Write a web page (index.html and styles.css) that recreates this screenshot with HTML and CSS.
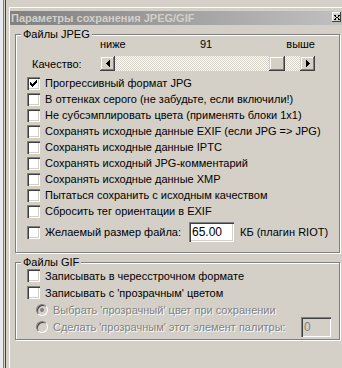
FILE: index.html
```html
<!DOCTYPE html>
<html lang="ru">
<head>
    <meta charset="UTF-8">
    <title>Параметры сохранения JPEG/GIF</title>
    <link rel="stylesheet" href="styles.css">
</head>
<body>

<div class="screen">
    <div class="edge"></div>

    <div class="window">
        <div class="caption">
            <span class="caption-title">Параметры сохранения JPEG/GIF</span>
            <span class="caption-close">
                <svg width="6" height="5" viewBox="0 0 6 5" shape-rendering="crispEdges">
                    <path d="M0 0h2v1H0zM4 0h2v1H4zM1 1h1v1H1zM4 1h1v1H4zM2 2h2v1H2zM1 3h1v1H1zM4 3h1v1H4zM0 4h2v1H0zM4 4h2v1H4z" fill="#000"/>
                </svg>
            </span>
        </div>

        <!-- JPEG -->
        <fieldset class="group group-jpeg">
            <legend>Файлы JPEG</legend>

            <div class="quality">
                <div class="quality-marks">
                    <span>ниже</span>
                    <span>91</span>
                    <span>выше</span>
                </div>
                <label class="quality-label">Качество:</label>
                <div class="slider">
                    <span class="btn slider-btn">
                        <svg width="4" height="7" viewBox="0 0 4 7" shape-rendering="crispEdges"><path d="M3 0h1v7H3zM2 1h1v5H2zM1 2h1v3H1zM0 3h1v1H0z" fill="#000"/></svg>
                    </span>
                    <span class="slider-track">
                        <span class="btn slider-thumb" style="margin-left:154px"></span>
                    </span>
                    <span class="btn slider-btn">
                        <svg width="4" height="7" viewBox="0 0 4 7" shape-rendering="crispEdges"><path d="M0 0h1v7H0zM1 1h1v5H1zM2 2h1v3H2zM3 3h1v1H3z" fill="#000"/></svg>
                    </span>
                </div>
            </div>

            <ul class="checks">
                <li class="check"><span class="box checked"><svg width="13" height="13" viewBox="0 0 13 13" shape-rendering="crispEdges"><path d="M3 5h1v3H3zM4 6h1v3H4zM5 7h1v3H5zM6 6h1v3H6zM7 5h1v3H7zM8 4h1v3H8zM9 3h1v3H9z" fill="#000"/></svg></span>Прогрессивный формат JPG</li>
                <li class="check"><span class="box"></span>В оттенках серого (не забудьте, если включили!)</li>
                <li class="check"><span class="box"></span>Не субсэмплировать цвета (применять блоки 1x1)</li>
                <li class="check"><span class="box"></span>Сохранять исходные данные EXIF (если JPG =&gt; JPG)</li>
                <li class="check"><span class="box"></span>Сохранять исходные данные IPTC</li>
                <li class="check"><span class="box"></span>Сохранять исходный JPG-комментарий</li>
                <li class="check"><span class="box"></span>Сохранять исходные данные XMP</li>
                <li class="check"><span class="box"></span>Пытаться сохранить с исходным качеством</li>
                <li class="check"><span class="box"></span>Сбросить тег ориентации в EXIF</li>
            </ul>

            <div class="check size-row">
                <span class="box"></span>
                <span>Желаемый размер файла:</span>
                <input class="field size-field" type="text" value="65.00">
                <span>КБ (плагин RIOT)</span>
            </div>
        </fieldset>

        <!-- GIF -->
        <fieldset class="group group-gif">
            <legend>Файлы GIF</legend>

            <ul class="checks gif-checks">
                <li class="check"><span class="box"></span>Записывать в чересстрочном формате</li>
                <li class="check"><span class="box"></span>Записывать с 'прозрачным' цветом</li>
                <li class="check radio-row disabled"><span class="radio checked"></span>Выбрать 'прозрачный' цвет при сохранении</li>
                <li class="check radio-row disabled"><span class="radio"></span>Сделать 'прозрачным' этот элемент палитры:<input class="field index-field" type="text" value="0" disabled></li>
            </ul>
        </fieldset>
    </div>
</div>

</body>
</html>
```

FILE: styles.css
```css
* {
    box-sizing: border-box;
}
body {
    margin: 0;
    background-color: #d4d0c8;
    font-family: "Liberation Sans", Arial, sans-serif;
    font-size: 11px;
    color: #000;
}
.screen {
    display: flex;
    height: 368px;
    overflow: hidden;
}
.edge {
    width: 9px;
    flex: none;
    background: linear-gradient(to right, #e8eaf0 0 3px, #808080 3px 4px, #d4d0c8 4px 5px, #404040 5px 6px, #d4d0c8 6px);
}
.window {
    flex: 1;
    min-width: 0;
    margin-top: 7px;
    padding-top: 3px;
    border-top: 1px solid #fff;
    border-left: 1px solid #fff;
}

/* title bar */
.caption {
    height: 14px;
    display: flex;
    justify-content: space-between;
    padding: 0 1px;
    background: linear-gradient(to right, #808080, #c0c0c0);
    color: #d4d0c8;
    font-weight: bold;
    line-height: 14px;
}
.caption-close {
    width: 9px;
    height: 10px;
    margin-top: 1px;
    display: flex;
    align-items: center;
    justify-content: center;
    background-color: #d4d0c8;
    box-shadow: inset -1px -1px 0 #404040, inset 1px 1px 0 #fff;
}

/* raised buttons */
.btn {
    display: flex;
    align-items: center;
    justify-content: center;
    background-color: #d4d0c8;
    box-shadow: inset -1px -1px 0 #404040, inset 1px 1px 0 #d4d0c8, inset -2px -2px 0 #808080, inset 2px 2px 0 #fff;
}

/* group boxes */
.group {
    margin: 3px 2px 0 5px;
    padding: 0;
    min-width: 0;
    border: 1px solid #808080;
    box-shadow: inset 1px 1px 0 #fff, 1px 1px 0 #fff;
}
.group legend {
    margin-left: 5px;
    padding: 0 2px;
    line-height: 13px;
    background-color: #d4d0c8;
}
.group-jpeg {
    padding-bottom: 10px;
}
.group-gif {
    padding-bottom: 4px;
}

/* quality slider */
.quality {
    display: grid;
    grid-template-columns: 68px 215px;
    row-gap: 5px;
    margin-top: -3px;
    padding-left: 16px;
}
.quality-marks {
    grid-column: 2;
    display: flex;
    justify-content: space-between;
    line-height: 13px;
}
.quality-label {
    align-self: center;
}
.slider {
    display: flex;
    height: 15px;
}
.slider-btn {
    width: 15px;
    flex: none;
}
.slider-track {
    flex: 1;
    display: flex;
    background-color: #fff;
    background-image: conic-gradient(#d4d0c8 25%, #fff 0 50%, #d4d0c8 0 75%, #fff 0);
    background-size: 2px 2px;
}
.slider-thumb {
    width: 16px;
    flex: none;
}

/* checkboxes */
.checks {
    list-style: none;
    margin: 4px 0 0;
    padding: 0 0 0 11px;
}
.check {
    display: flex;
    align-items: center;
    gap: 5px;
    height: 16px;
    white-space: nowrap;
}
.box {
    width: 13px;
    height: 13px;
    flex: none;
    background-color: #fff;
    box-shadow: inset 1px 1px 0 #808080, inset 2px 2px 0 #404040, inset -1px -1px 0 #fff, inset -2px -2px 0 #d4d0c8;
}
.box svg {
    display: block;
}
.size-row {
    height: 20px;
    margin-top: 3px;
    padding-left: 11px;
}
.field {
    height: 20px;
    padding: 0 3px;
    border: none;
    font: inherit;
    font-size: 12px;
    color: #000;
    background-color: #fff;
    box-shadow: inset 1px 1px 0 #808080, inset 2px 2px 0 #404040, inset -1px -1px 0 #fff, inset -2px -2px 0 #d4d0c8;
    outline: none;
}
.size-field {
    width: 45px;
    margin: 0 1px 0 3px;
}

/* gif */
.gif-checks {
    margin-top: -2px;
}
.gif-checks .check {
    height: 17px;
}
.radio-row {
    padding-left: 9px;
}
.radio {
    width: 12px;
    height: 12px;
    flex: none;
    border-radius: 50%;
    border: 1px solid;
    border-color: #808080 #fff #fff #808080;
    background-color: #d4d0c8;
    box-shadow: inset 1px 1px 0 #404040;
    display: flex;
    align-items: center;
    justify-content: center;
}
.radio.checked::after {
    content: "";
    width: 4px;
    height: 4px;
    border-radius: 50%;
    background-color: #808080;
}
.disabled {
    color: #808080;
    text-shadow: 1px 1px 0 #fff;
}
.index-field {
    width: 30px;
    margin: 0 8px 0 auto;
    color: #808080;
    background-color: #d4d0c8;
    text-shadow: none;
}
```
